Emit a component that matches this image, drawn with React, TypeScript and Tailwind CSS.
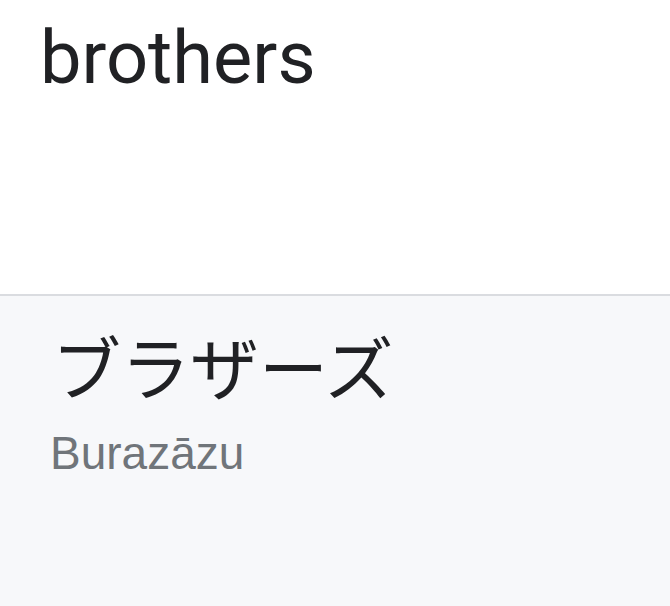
export default function App() {
  return (
    <div className="w-[670px] h-[606px] flex flex-col bg-white overflow-hidden" style={{ fontFamily: "Roboto, 'Noto Sans CJK JP', sans-serif" }}>
      <section className="h-[294px] shrink-0 px-[40px] pt-[21px]">
        <h1 className="text-[74px] leading-[74px] text-[#202124] font-normal">brothers</h1>
      </section>
      <section className="flex-1 border-t-2 border-[#dadce0] bg-[#f7f8fa] px-[52px] pt-[27px]">
        <p className="text-[69px] leading-[84px] text-[#202124]" style={{ fontFamily: "'Noto Sans CJK JP', sans-serif" }}>
          ブラザーズ
        </p>
        <p
          className="-ml-[2px] mt-[20px] text-[46px] leading-[52px] text-[#70757a]"
          style={{ fontFamily: "'Liberation Sans', Arial, sans-serif" }}
        >
          Burazāzu
        </p>
      </section>
    </div>
  );
}
